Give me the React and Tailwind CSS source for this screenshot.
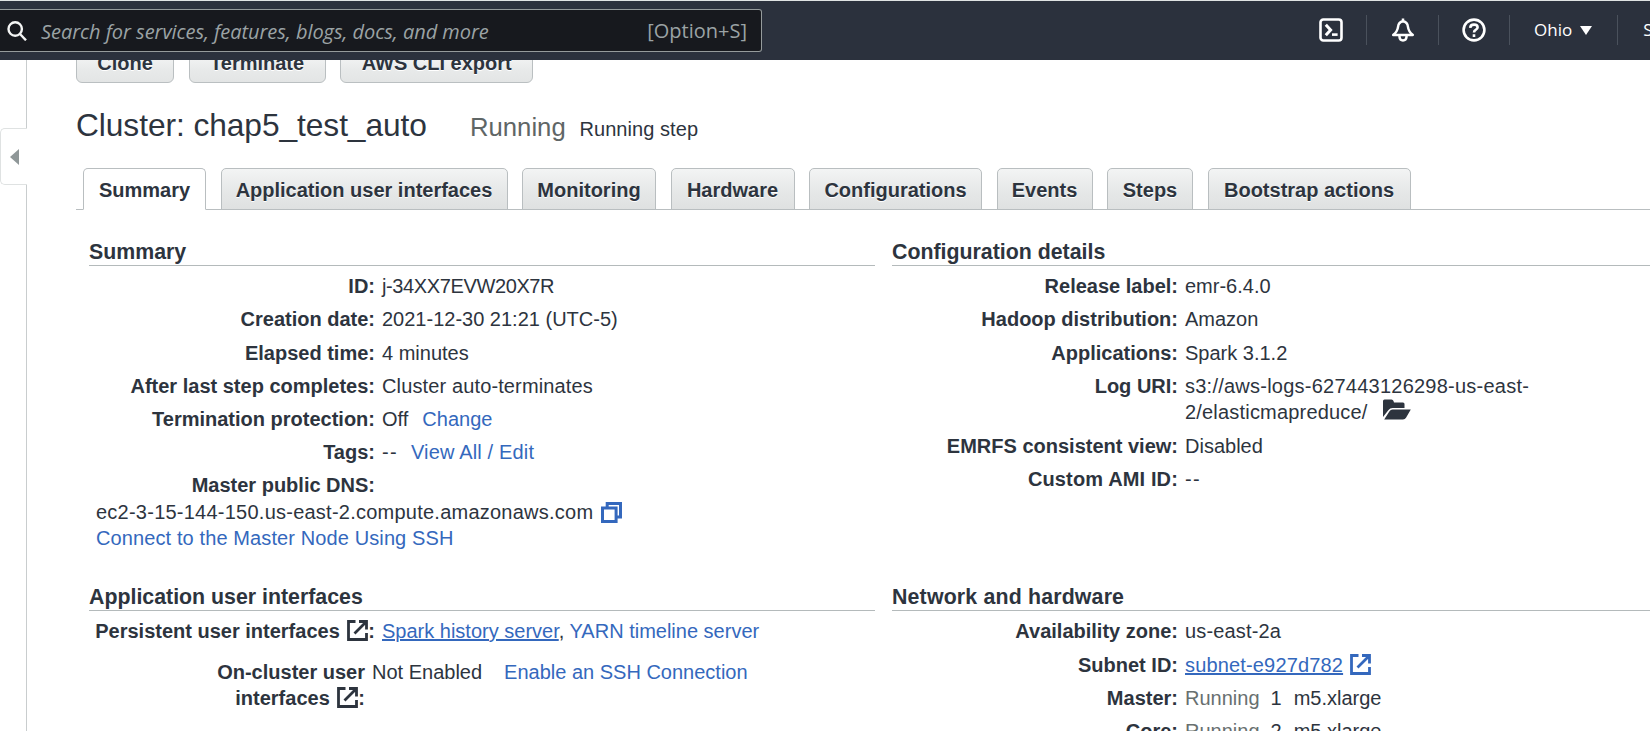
const link = "text-[#3468bd]";

function ExternalIcon({ className }) {
  return (
    <svg viewBox="0 0 21 21" fill="none" stroke="currentColor" strokeWidth="2.8" className={className}>
      <path d="M8.5 1.5H1.5V19.5H19.5V13" />
      <path d="M12 1.5H19.5V9.5M18.5 2.5L7.5 13.5" />
    </svg>
  );
}

function CopyIcon() {
  return (
    <svg viewBox="0 0 21 21" fill="none" stroke="currentColor" strokeWidth="3" className={`ml-[8px] h-[21px] w-[21px] ${link}`}>
      <path d="M1.5 5.9H15.1V19.5H1.5Z" />
      <path d="M6.2 5.5V1.6H19.5V15H15.5" />
    </svg>
  );
}

function FolderIcon() {
  return (
    <svg viewBox="0 0 28 21" fill="currentColor" className="ml-[15px] inline-block h-[21px] w-[28px] align-[-1px]">
      <path d="M0 18V2Q0 0.5 1.5 0.5H8.5Q10 0.5 10.5 2L11 3.5H20Q21.5 3.5 21.5 5V9H9.5Q7 9 5.5 11Z" />
      <path d="M1.2 20.5L6.5 12.2Q7.5 10.6 9.5 10.6H27.8L23 18.7Q22 20.5 20 20.5Z" />
    </svg>
  );
}

function Separator({ className }) {
  return <span className={`h-[30px] w-px bg-[#4a515c] ${className}`} />;
}

function Header() {
  return (
    <header className="relative z-10 flex h-[60px] shrink-0 items-start border-t border-[#dfe3e3] bg-[#2b313d]">
      <div className="mt-2 flex h-[43px] w-[762px] shrink-0 items-center rounded-r-[3px] border border-l-0 border-[#959b9c] bg-[#17191e] font-['Open_Sans',sans-serif] text-[#9ba3a5]">
        <svg viewBox="0 0 20 20" fill="none" stroke="#f4f5f5" strokeWidth="2.4" className="ml-[7px] h-5 w-5">
          <circle cx="8.2" cy="8" r="6.7" />
          <path d="M13 13L19 19.3" />
        </svg>
        <span className="mt-[2px] ml-[14px] whitespace-nowrap text-[20px] italic leading-none tracking-[-0.05px]">
          Search for services, features, blogs, docs, and more
        </span>
        <span className="mr-[14px] ml-auto text-[20px] leading-none">[Option+S]</span>
      </div>
      <div className="mt-[14px] ml-[557px] flex h-[30px] shrink-0 items-center text-white">
        <svg viewBox="0 0 24 24" fill="none" stroke="currentColor" strokeWidth="2.6" className="h-6 w-6">
          <rect x="1.5" y="1.5" width="21" height="21" rx="2.8" />
          <path d="M6.8 6.8L11.6 12L6.8 17.2" strokeWidth="3" />
          <path d="M13 16.6H18.6" />
        </svg>
        <Separator className="ml-[23px]" />
        <svg viewBox="0 0 24 24" fill="none" stroke="currentColor" strokeWidth="2.5" strokeLinejoin="round" className="ml-6 h-6 w-6">
          <path d="M2.2 17Q6.6 13.2 7 9Q7.4 4 12 3.2Q16.6 4 17 9Q17.4 13.2 21.8 17Z" />
          <path d="M12 0.4V3M8.5 17.5V19Q8.8 22.5 12 22.5Q15.2 22.5 15.5 19V17.5" />
        </svg>
        <Separator className="ml-[23px]" />
        <svg viewBox="0 0 24 24" fill="none" stroke="currentColor" strokeWidth="2.6" className="ml-[23px] h-6 w-6">
          <circle cx="12" cy="12" r="10.4" />
          <path d="M8.2 9.8Q8.4 6.6 12 6.6Q15.6 6.6 15.6 9.3Q15.6 10.9 13.7 11.9Q12 12.8 12 14.6M12 16.3V18.9" />
        </svg>
        <Separator className="ml-[23px]" />
        <span className="-mt-px ml-[24px] font-['Open_Sans',sans-serif] text-[17px] leading-none">Ohio</span>
        <svg viewBox="0 0 12 9" fill="currentColor" className="ml-[8px] h-[9px] w-3">
          <path d="M0 0H12L6 9Z" />
        </svg>
        <Separator className="ml-[25px]" />
        <span className="-mt-px ml-[25px] font-['Open_Sans',sans-serif] text-[17px] leading-none">S</span>
      </div>
    </header>
  );
}

function SideRail() {
  return (
    <div className="flex w-[27px] shrink-0 flex-col">
      <div className="h-[68px] border-r border-[#c9cdce]" />
      <div className="flex h-[57px] items-center rounded-l-[5px] border border-r-0 border-[#dfe2e2]">
        <svg viewBox="0 0 9 16" fill="#8f9798" className="ml-[9px] h-4 w-[9px]">
          <path d="M9 0V16L0 8Z" />
        </svg>
      </div>
      <div className="flex-1 border-r border-[#c9cdce]" />
    </div>
  );
}

function ActionButton({ children, className }) {
  return (
    <button
      className={`flex h-[43px] items-start justify-center rounded-[6px] border border-[#babfc1] bg-linear-to-b from-white via-[#e8eaea] via-70% to-[#e3e5e5] pt-[10px] text-[20px] font-bold leading-[24px] whitespace-nowrap text-shadow-[0_1px_0_#fff] ${className}`}
    >
      {children}
    </button>
  );
}

const tabs = [
  ["Summary", "w-[123px]"],
  ["Application user interfaces", "w-[287px]"],
  ["Monitoring", "w-[134px]"],
  ["Hardware", "w-[124px]"],
  ["Configurations", "w-[173px]"],
  ["Events", "w-[96px]"],
  ["Steps", "w-[86px]"],
  ["Bootstrap actions", "w-[203px]"],
];

function Tabs() {
  return (
    <nav className="mt-[23px] flex h-[42px] border-b border-[#b9bec0] pl-[7px]">
      <div className="flex h-[42px] gap-[14.5px]">
        {tabs.map(([label, width], i) => (
          <div
            key={label}
            className={`${width} h-[42px] shrink-0 rounded-t-[5px] border border-[#b9bec0] text-center text-[20px] font-bold leading-[43px] whitespace-nowrap ${
              i === 0 ? "border-b-white bg-white" : "bg-linear-to-b from-[#f3f4f4] via-[#e7e9e9] to-[#dfe1e1] text-shadow-[0_1px_0_#fff]"
            }`}
          >
            {label}
          </div>
        ))}
      </div>
    </nav>
  );
}

function Heading({ children, className = "" }) {
  return <h2 className={`h-[29px] border-b border-[#b4babb] text-[21.33px] font-bold leading-[30px] ${className}`}>{children}</h2>;
}

function Row({ label, labelWidth, children, className }) {
  return (
    <div className={`flex leading-[26px] ${className}`}>
      <div className={`shrink-0 text-right font-bold whitespace-nowrap ${labelWidth}`}>{label}</div>
      <div className="ml-[7px] whitespace-nowrap">{children}</div>
    </div>
  );
}

function Left() {
  const w = "w-[286px]";
  return (
    <section className="w-[786px] shrink-0">
      <div className="h-[345px]">
        <Heading>Summary</Heading>
        <Row label="ID:" labelWidth={w} className="mt-[7px] h-[33px]"><span className="tracking-[-0.38px]">j-34XX7EVW20X7R</span></Row>
        <Row label="Creation date:" labelWidth={w} className="h-[34px]">2021-12-30 21:21 (UTC-5)</Row>
        <Row label="Elapsed time:" labelWidth={w} className="h-[33px]">4 minutes</Row>
        <Row label="After last step completes:" labelWidth={w} className="h-[33px]"><span className="tracking-[0.13px]">Cluster auto-terminates</span></Row>
        <Row label="Termination protection:" labelWidth={w} className="h-[33px]">
          Off<a className={`ml-[14px] ${link}`}>Change</a>
        </Row>
        <Row label="Tags:" labelWidth={w} className="h-[33px]">
          <span className="tracking-[1.3px]">--</span><a className={`ml-[13px] tracking-[0.16px] ${link}`}>View All / Edit</a>
        </Row>
        <Row label="Master public DNS:" labelWidth={w} className="h-[27px]" />
        <div className="flex h-[26px] items-center pl-[7px] leading-[26px] tracking-[0.24px]">
          ec2-3-15-144-150.us-east-2.compute.amazonaws.com
          <CopyIcon />
        </div>
        <a className={`block pl-[7px] leading-[26px] tracking-[0.11px] ${link}`}>Connect to the Master Node Using SSH</a>
      </div>
      <Heading>Application user interfaces</Heading>
      <Row
        label={<>Persistent user interfaces <ExternalIcon className="ml-[2px] inline-block h-[21px] w-[21px] align-[-3px]" />:</>}
        labelWidth={w}
        className="mt-[7px] h-[41px]"
      >
        <a className={`underline ${link}`}>Spark history server</a>, <a className={link}>YARN timeline server</a>
      </Row>
      <Row
        label={<>On-cluster user<br />interfaces <ExternalIcon className="ml-[2px] inline-block h-[21px] w-[21px] align-[-3px]" />:</>}
        labelWidth="w-[276px]"
      >
        Not Enabled<a className={`ml-[22px] ${link}`}>Enable an SSH Connection</a>
      </Row>
    </section>
  );
}

function Right() {
  const w = "w-[286px]";
  return (
    <section className="ml-[17px] flex-1">
      <div className="h-[345px]">
        <Heading>Configuration details</Heading>
        <Row label="Release label:" labelWidth={w} className="mt-[7px] h-[33px]">emr-6.4.0</Row>
        <Row label="Hadoop distribution:" labelWidth={w} className="h-[34px]">Amazon</Row>
        <Row label="Applications:" labelWidth={w} className="h-[33px]">Spark 3.1.2</Row>
        <Row label="Log URI:" labelWidth={w} className="h-[60px]">
          <span className="tracking-[0.24px]">s3://aws-logs-627443126298-us-east-</span>
          <br />
          <span className="tracking-[0.19px]">2/elasticmapreduce/<FolderIcon /></span>
        </Row>
        <Row label="EMRFS consistent view:" labelWidth={w} className="h-[33px]">Disabled</Row>
        <Row label={<span className="tracking-[0.14px]">Custom AMI ID:</span>} labelWidth={w} className="h-[33px]"><span className="tracking-[1.3px]">--</span></Row>
      </div>
      <Heading className="tracking-[0.17px]">Network and hardware</Heading>
      <Row label="Availability zone:" labelWidth={w} className="mt-[7px] h-[34px]"><span className="tracking-[0.15px]">us-east-2a</span></Row>
      <Row label="Subnet ID:" labelWidth={w} className="h-[33px]">
        <a className={link}>
          <span className="tracking-[0.16px] underline">subnet-e927d782</span>
          <ExternalIcon className="ml-[7px] inline-block h-[21px] w-[21px] align-[-3px]" />
        </a>
      </Row>
      <Row label="Master:" labelWidth={w} className="h-[33px]">
        <span className="text-[#687070]">Running</span><span className="ml-[11px]">1</span><span className="ml-[12px]">m5.xlarge</span>
      </Row>
      <Row label="Core:" labelWidth={w} className="h-[33px]">
        <span className="text-[#687070]">Running</span><span className="ml-[11px]">2</span><span className="ml-[12px]">m5.xlarge</span>
      </Row>
    </section>
  );
}

export default function App() {
  return (
    <div className="flex h-[731px] w-[1650px] flex-col overflow-hidden bg-white font-['Liberation_Sans',Arial,sans-serif] text-[20px] text-[#2d343e]">
      <Header />
      <div className="flex min-h-0 flex-1">
        <SideRail />
        <main className="ml-[49px] min-w-0 flex-1">
          <div className="-mt-[20px] flex gap-[14.6px]">
            <ActionButton className="w-[98px]">Clone</ActionButton>
            <ActionButton className="w-[137px]">Terminate</ActionButton>
            <ActionButton className="w-[193px]">AWS CLI export</ActionButton>
          </div>
          <div className="mt-[22px] flex h-[40px] items-baseline leading-[40px] whitespace-nowrap">
            <h1 className="w-[394px] text-[31.7px] tracking-[-0.06px]">Cluster: chap5_test_auto</h1>
            <span className="w-[109.5px] text-[25.7px] text-[#5f6666]">Running</span>
            <span className="tracking-[0.06px]">Running step</span>
          </div>
          <Tabs />
          <div className="mt-[27px] flex pl-[13px]">
            <Left />
            <Right />
          </div>
        </main>
      </div>
    </div>
  );
}
